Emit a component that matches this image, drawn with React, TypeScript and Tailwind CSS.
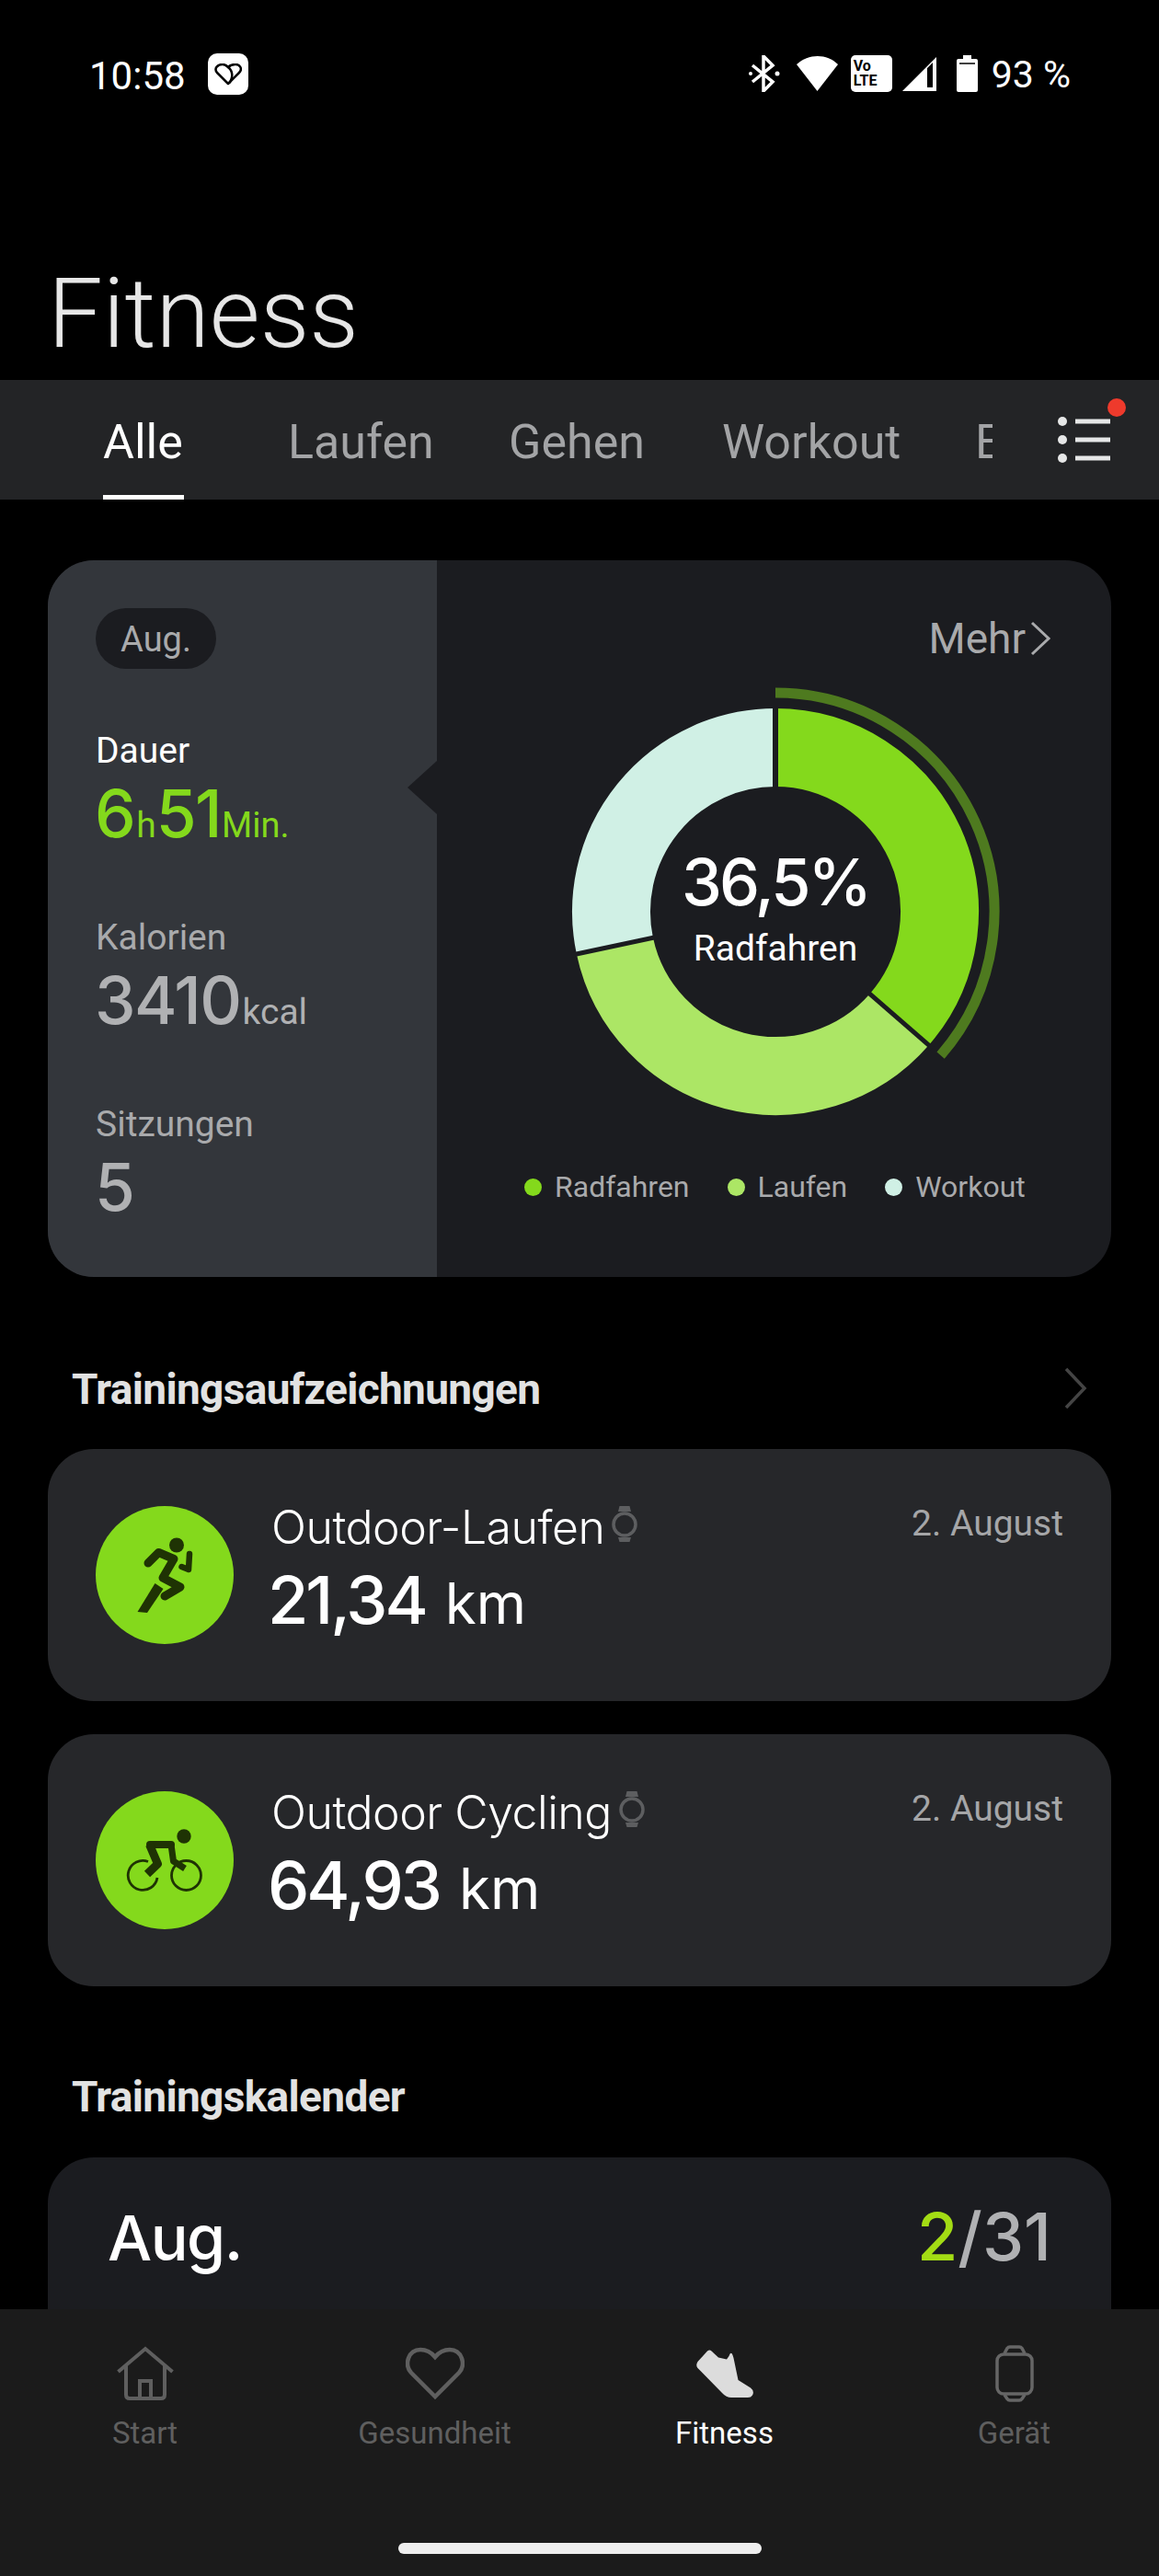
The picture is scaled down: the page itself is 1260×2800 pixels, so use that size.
const roboto = "font-['Roboto',sans-serif]";
const num = "font-['Inter',sans-serif]";

function Donut() {
  const cx = 250;
  const cy = 250;
  const arc = (r: number, from: number, to: number) => {
    const a = ((from - 90) * Math.PI) / 180;
    const b = ((to - 90) * Math.PI) / 180;
    const large = to - from > 180 ? 1 : 0;
    return `M${cx + r * Math.cos(a)} ${cy + r * Math.sin(a)}A${r} ${r} 0 ${large} 1 ${cx + r * Math.cos(b)} ${cy + r * Math.sin(b)}`;
  };
  const sep = (deg: number) => {
    const a = ((deg - 90) * Math.PI) / 180;
    return `M${cx + 130 * Math.cos(a)} ${cy + 130 * Math.sin(a)}L${cx + 226 * Math.cos(a)} ${cy + 226 * Math.sin(a)}`;
  };
  return (
    <svg width="500" height="500" viewBox="0 0 500 500" className="block">
      <path d={arc(178.5, 0, 131)} fill="none" stroke="#84d91c" strokeWidth="85" />
      <path d={arc(178.5, 131, 258)} fill="none" stroke="#ace665" strokeWidth="85" />
      <path d={arc(178.5, 258, 360)} fill="none" stroke="#d0f0e5" strokeWidth="85" />
      <path d={sep(0)} stroke="#1b1c20" strokeWidth="6" />
      <path d={sep(131)} stroke="#1b1c20" strokeWidth="5" />
      <path d={sep(258)} stroke="#1b1c20" strokeWidth="5" />
      <path d={arc(238, 0, 131)} fill="none" stroke="#4e7a1f" strokeWidth="11" />
    </svg>
  );
}

function Stat({ label, active, value, unit, value2, unit2, mt }: { label: string; active?: boolean; value: string; unit?: string; value2?: string; unit2?: string; mt: string }) {
  return (
    <div className={mt}>
      <div className={`text-[39px] leading-[46px] ${active ? "text-white" : "text-[#a9aaac]"}`}>{label}</div>
      <div className={`${num} mt-[7px] -ml-[1px] flex items-baseline h-[76px] leading-[76px] tracking-[-1.5px] ${active ? "text-[#84d91c]" : "text-[#b0b1b3]"}`}>
        <span className="text-[71px] font-medium">{value}</span>
        {unit && <span className={`${roboto} text-[39px] tracking-normal ml-[2px]`}>{unit}</span>}
        {value2 && <span className="text-[71px] font-medium">{value2}</span>}
        {unit2 && <span className={`${roboto} text-[38px] tracking-normal ml-[1px]`}>{unit2}</span>}
      </div>
    </div>
  );
}

function LegendItem({ color, label }: { color: string; label: string }) {
  return (
    <div className="flex items-center gap-[14px]">
      <span className={`w-[19px] h-[19px] rounded-full ${color}`} />
      <span className="text-[32px] leading-[40px] text-[#a9aaac]">{label}</span>
    </div>
  );
}

function Runner() {
  return (
    <svg width="150" height="150" viewBox="0 0 150 150" fill="none">
      <circle cx="88" cy="42.5" r="8" fill="#1f3304" />
      <path d="M57 62 68.5 50.5 85 57.5 73 78 92 88 75 98" stroke="#1f3304" strokeWidth="9" strokeLinejoin="round" strokeLinecap="round" />
      <path d="M64.5 84 73.5 90 56 116 45.500 115Z" fill="#1f3304" />
      <path d="M102 52 101 69 93.500 66" stroke="#1f3304" strokeWidth="6.500" strokeLinejoin="round" strokeLinecap="round" />
    </svg>
  );
}

function Cyclist() {
  return (
    <svg width="150" height="150" viewBox="0 0 150 150" fill="none">
      <circle cx="96" cy="49" r="7.700" fill="#1f3304" />
      <path d="M57 76.500A16 16 0 1 0 67 94" stroke="#1f3304" strokeWidth="2.800" />
      <circle cx="98.500" cy="91.500" r="16" stroke="#1f3304" strokeWidth="2.800" />
      <path d="M59 58H82" stroke="#1f3304" strokeWidth="8" strokeLinecap="round" />
      <path d="M58.500 58 67.500 79 56 90" stroke="#1f3304" strokeWidth="9" strokeLinejoin="round" />
      <path d="M82 58 84.500 76 97 84" stroke="#1f3304" strokeWidth="7" strokeLinejoin="round" />
    </svg>
  );
}

function WatchSmall() {
  return (
    <svg width="28" height="40" viewBox="0 0 28 40" fill="none" className="shrink-0">
      <path d="M7 6 8.500 0H19.500L21 6ZM7 34 8.500 39H19.500L21 34Z" fill="#5d5e60" />
      <circle cx="14" cy="20" r="12" stroke="#5d5e60" strokeWidth="3.500" />
    </svg>
  );
}

function WorkoutCard({ icon, title, value }: { icon: React.ReactNode; title: string; value: string }) {
  return (
    <div className="h-[274px] rounded-[50px] bg-[#26272a] flex items-start pl-[52px] pr-[52px] pt-[62px]">
      <div className="w-[150px] h-[150px] rounded-full bg-[#84d91c] shrink-0">{icon}</div>
      <div className="ml-[41px] flex-1 -mt-[6px]">
        <div className="flex items-center">
          <span className={`${num} text-[50px] leading-[58px] font-light text-white tracking-[-0.5px]`}>{title}</span>
          <span className="ml-[8px] -mt-[6px]"><WatchSmall /></span>
          <span className="ml-auto text-[39px] leading-[46px] text-[#a5a6a8] -mt-[9px]">2. August</span>
        </div>
        <div className={`${num} -ml-[4px] mt-[8px] flex items-baseline text-white leading-[84px]`}>
          <span className="text-[72px] font-medium tracking-[-3px]">{value}</span>
          <span className="text-[62px] font-normal ml-[21px]">km</span>
        </div>
      </div>
    </div>
  );
}

function NavItem({ icon, label, active }: { icon: React.ReactNode; label: string; active?: boolean }) {
  return (
    <div className="flex flex-col items-center w-[315px]">
      <div className="h-[66px] flex items-center justify-center">{icon}</div>
      <div className={`mt-[12px] text-[33px] leading-[40px] ${active ? "text-white" : "text-[#5f5f5f]"}`}>{label}</div>
    </div>
  );
}

export default function App() {
  return (
    <div className={`${roboto} w-[1260px] h-[2800px] bg-black flex flex-col overflow-hidden`}>
      <div className="flex-1 min-h-0 overflow-hidden">
        {/* status bar */}
        <div className="h-[160px] flex items-start pt-[59px] pl-[97px] pr-[96px] text-white">
          <span className="text-[42px] leading-[48px]">10:58</span>
          <span className="ml-[24px] w-[44px] h-[45px] -mt-[1px] rounded-[10px] bg-white flex items-center justify-center">
            <svg width="30" height="24" viewBox="0 0 30 24" fill="none" stroke="#000" strokeWidth="2.500" strokeLinejoin="round">
              <path d="M15 22 3 10C-1 5 4 1 9 1 12 1 14 3 15 4 17 2 20 1 23 1 28 1 31 6 27 10Z" />
              <path d="M15 4C20 8 21 15 16 21.500" />
            </svg>
          </span>
          <div className="ml-auto flex items-center h-[44px] mt-[-1px]">
            <svg width="36" height="40" viewBox="0 0 36 40" fill="none" stroke="#fff" strokeWidth="3.500">
              <path d="M5 11 27 29 17 39V1L27 11 5 29" />
              <circle cx="3" cy="20" r="2" fill="#fff" stroke="none" />
              <circle cx="32" cy="20" r="2.500" fill="#fff" stroke="none" />
            </svg>
            <svg width="46" height="38" viewBox="0 0 46 38" className="ml-[17px]">
              <path d="M0 9C13-3 33-3 45 9L22.500 38Z" fill="#fff" />
            </svg>
            <div className="ml-[13px] w-[45px] h-[40px] rounded-[5px] bg-white text-black text-[16px] font-bold leading-[16px] flex flex-col justify-center pl-[3px]">
              <span>Vo</span>
              <span>LTE</span>
            </div>
            <svg width="38" height="38" viewBox="0 0 38 38" className="ml-[11px]">
              <path fillRule="evenodd" d="M0 38 37 1V38ZM27 13V34H33V7Z" fill="#fff" />
            </svg>
            <svg width="23" height="40" viewBox="0 0 23 40" className="ml-[21px]">
              <path d="M7 0H16V4H21Q23 4 23 6V38Q23 40 21 40H2Q0 40 0 38V6Q0 4 2 4H7Z" fill="#fff" />
              <path d="M3 9H20" stroke="#000" strokeWidth="1.500" />
            </svg>
            <span className="ml-[15px] mt-[2px] text-[41px] leading-[44px] whitespace-nowrap">93 %</span>
          </div>
        </div>

        {/* title */}
        <div className="h-[253px] flex items-end">
          <h1 className="ml-[52px] mb-[12px] text-[106px] leading-[120px] font-light text-[#e6e6e6]">Fitness</h1>
        </div>

        {/* tabs */}
        <div className="h-[130px] bg-[#232426] flex items-start overflow-hidden">
          <div className="pl-[112px] pt-[38px] flex text-[52px] leading-[60px] text-[#a3a4a6]">
            <div className="w-[201px] flex flex-col">
              <span className="text-white">Alle</span>
              <span className="mt-[27px] w-[88px] h-[7px] bg-white" />
            </div>
            <span className="w-[240px]">Laufen</span>
            <span className="w-[232px]">Gehen</span>
            <span className="w-[275px]">Workout</span>
            <span className="w-[19px] overflow-hidden">E</span>
          </div>
          <div className="relative ml-[71px] mt-[40px]">
            <svg width="60" height="50" viewBox="0 0 60 50" className="block">
              <circle cx="5" cy="5" r="5" fill="#e6e7e7" />
              <circle cx="5" cy="25" r="5" fill="#e6e7e7" />
              <circle cx="5" cy="45" r="5" fill="#e6e7e7" />
              <path d="M19 5H57M19 25H57M19 45H57" stroke="#e6e7e7" strokeWidth="5" />
            </svg>
            <span className="absolute -top-[20px] left-[54px] w-[20px] h-[20px] rounded-full bg-[#ee3a2c]" />
          </div>
        </div>

        {/* summary card */}
        <div className="mx-[52px] mt-[66px] h-[779px] rounded-[50px] bg-[#1b1c20] flex overflow-hidden">
          <div className="relative w-[423px] bg-[#33363b] pl-[52px] pt-[52px] shrink-0">
            <div className="w-[131px] h-[66px] pt-[3px] rounded-full bg-[#1b1c20] flex items-center justify-center text-[38px] text-[#a9aaac]">Aug.</div>
            <Stat label="Dauer" active value="6" unit="h" value2="51" unit2="Min." mt="mt-[66px]" />
            <Stat label="Kalorien" value="3410" unit="kcal" mt="mt-[74px]" />
            <Stat label="Sitzungen" value="5" mt="mt-[74px]" />
            <div className="absolute right-0 top-[218px] w-0 h-0 border-y-[29px] border-y-transparent border-r-[32px] border-r-[#1b1c20]" />
          </div>
          <div className="flex-1 flex flex-col">
            <div className="flex items-center justify-end pr-[65px] pt-[58px] h-[112px] text-[46px] leading-[56px] text-[#a9aaac]">
              <span>Mehr</span>
              <svg width="24" height="38" viewBox="0 0 24 38" fill="none" stroke="#a9aaac" strokeWidth="3" className="ml-[4px]">
                <path d="M3 2 21 19 3 36" />
              </svg>
            </div>
            <div className="relative ml-[118px] w-[500px] h-[500px] mt-[20px]">
              <Donut />
              <div className="absolute inset-0 flex flex-col items-center justify-center text-white">
                <div className={`${num} text-[70px] leading-[84px] font-medium tracking-[-3px] -mt-[12px]`}>36,5%</div>
                <div className="text-[39px] leading-[46px] mt-[7px]">Radfahren</div>
              </div>
            </div>
            <div className="flex ml-[95px] gap-[41px] mt-[29px]">
              <LegendItem color="bg-[#84d91c]" label="Radfahren" />
              <LegendItem color="bg-[#ace665]" label="Laufen" />
              <LegendItem color="bg-[#d0f0e5]" label="Workout" />
            </div>
          </div>
        </div>

        {/* workouts */}
        <div className="mt-[94px] ml-[78px] mr-[78px] flex items-center justify-between h-[56px]">
          <h2 className="text-[46px] leading-[56px] font-bold text-[#e2e2e2] tracking-[-0.65px]">Trainingsaufzeichnungen</h2>
          <svg width="26" height="46" viewBox="0 0 26 46" fill="none" stroke="#444" strokeWidth="3.500" className="-mt-[3px]">
            <path d="M3 2 23 23 3 44" />
          </svg>
        </div>
        <div className="mx-[52px] mt-[37px] flex flex-col gap-[36px]">
          <WorkoutCard icon={<Runner />} title="Outdoor-Laufen" value="21,34" />
          <WorkoutCard icon={<Cyclist />} title="Outdoor Cycling" value="64,93" />
        </div>

        {/* calendar */}
        <h2 className="mt-[92px] ml-[78px] text-[46px] leading-[56px] font-bold text-[#e2e2e2] tracking-[-0.65px]">Trainingskalender</h2>
        <div className="mx-[52px] mt-[38px] h-[300px] rounded-[50px] bg-[#1b1c20] flex items-start justify-between pl-[65px] pr-[65px] pt-[46px]">
          <span className={`${num} mt-[1px] text-[68px] leading-[80px] font-medium text-white tracking-[-1.5px]`}>Aug.</span>
          <span className={`${num} text-[72px] leading-[80px] font-medium text-[#b0b1b3]`}>
            <span className="text-[#a3dc14]">2</span>/31
          </span>
        </div>
      </div>

      {/* bottom nav */}
      <div className="h-[290px] shrink-0 bg-[#1b1b1b] flex flex-col">
        <div className="flex pt-[37px]">
          <NavItem
            label="Start"
            icon={
              <svg width="62" height="60" viewBox="0 0 62 60" fill="none" stroke="#5f5f5f" strokeWidth="4">
                <path d="M1.500 28 31 3 60.500 28" />
                <path d="M10 21V53Q10 57 14 57H48Q52 57 52 53V21" />
                <path d="M25 57V38H37V57" />
              </svg>
            }
          />
          <NavItem
            label="Gesundheit"
            icon={
              <svg width="64" height="58" viewBox="0 0 64 58" fill="none" stroke="#5f5f5f" strokeWidth="4.500">
                <path d="M32 54 6 28C-2 19 3 3 16 3 23 3 28 6 32 11 36 6 41 3 48 3 61 3 66 19 58 28Z" />
              </svg>
            }
          />
          <NavItem
            label="Fitness"
            active
            icon={
              <svg width="62" height="53" viewBox="0 0 62 53">
                <path d="M12 1.500Q14.500-.5 16.500 1.500L24 8.500 33 10.500 35.500 7Q38-.5 40.500 9L45.500 33 59 41.500Q63.500 45 61 49.500 59.500 52 56 52H38Q32.500 52 28 47L1.500 20Q-1 17 1.500 13Z" fill="#dcdcdc" />
              </svg>
            }
          />
          <NavItem
            label="Gerät"
            icon={
              <svg width="42" height="62" viewBox="0 0 42 62" fill="none" stroke="#666" strokeWidth="3.500">
                <rect x="2" y="10" width="38" height="43" rx="7" />
                <path d="M10 9 13 3.500Q14 2 16 2H26Q28 2 29 3.500L32 9M10 54 13 58.500Q14 60 16 60H26Q28 60 29 58.500L32 54" />
              </svg>
            }
          />
        </div>
        <div className="mt-auto mb-[24px] mx-auto w-[395px] h-[12px] rounded-full bg-[#eeeeee]" />
      </div>
    </div>
  );
}
